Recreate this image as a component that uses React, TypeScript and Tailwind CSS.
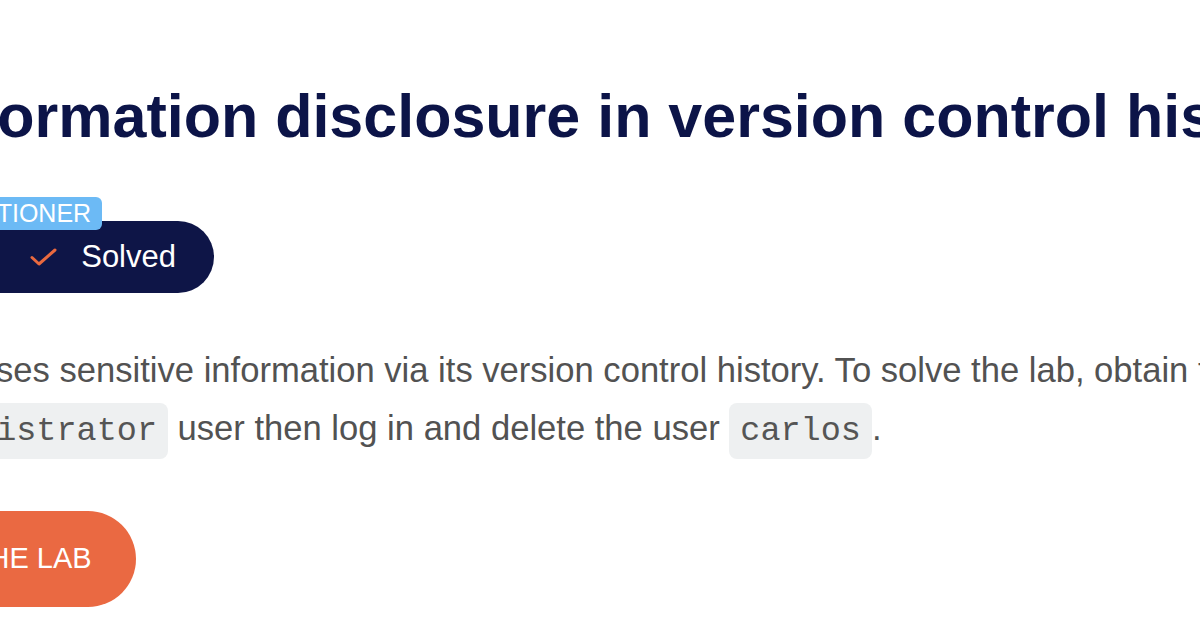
import { FC } from "react";

const CheckIcon: FC = () => (
  <svg width="27" height="18" viewBox="0 0 27 18" fill="none">
    <path
      d="M2 9.5 L9 16 L25 2"
      stroke="#e9693f"
      strokeWidth="3"
      strokeLinecap="round"
      strokeLinejoin="round"
    />
  </svg>
);

const codeFont = { fontFamily: '"Liberation Mono", "Courier New", monospace' };

const App: FC = () => {
  return (
    <div
      className="w-[1200px] h-[628px] overflow-hidden bg-white"
      style={{ fontFamily: '"Liberation Sans", Arial, sans-serif' }}
    >
      <div className="ml-[-223px] w-[1700px] pt-[86px]">
        {/* lab title */}
        <h1 className="text-[61px] leading-none font-bold text-[#0c1448] whitespace-nowrap">
          Lab: Information disclosure in version control history
        </h1>

        {/* level + status */}
        <div className="mt-[50px]">
          <div className="relative z-10 ml-[117px] inline-flex h-[33px] items-center rounded-[6px] bg-[#6cbaf5] px-[11px] text-[25px] leading-none text-white">
            PRACTITIONER
          </div>
          <div className="mt-[-9px] flex h-[72px] w-[437px] items-center rounded-full bg-[#0e1547] pl-[40px] pr-[38px] text-[31px] text-white">
            <span className="mr-auto">LAB</span>
            <CheckIcon />
            <span className="ml-[24px]">Solved</span>
          </div>
        </div>

        {/* description */}
        <p className="mt-[48px] text-[34.6px] leading-[58px] text-[#525252] whitespace-nowrap">
          This lab discloses sensitive information via its version control
          history. To solve the lab, obtain the password
          <br />
          for the{" "}
          <code
            className="rounded-[8px] bg-[#eef0f1] px-[11px] py-[9px] text-[33.5px] text-[#555]"
            style={codeFont}
          >
            administrator
          </code>{" "}
          user then log in and delete the user{" "}
          <code
            className="rounded-[8px] bg-[#eef0f1] px-[11px] py-[9px] text-[33.5px] text-[#555]"
            style={codeFont}
          >
            carlos
          </code>
          .
        </p>

        <button className="mt-[51px] ml-[23px] h-[96px] rounded-full bg-[#ea6942] px-[44px] text-[29px] uppercase text-white">
          Access the lab
        </button>
      </div>
    </div>
  );
};

export default App;
